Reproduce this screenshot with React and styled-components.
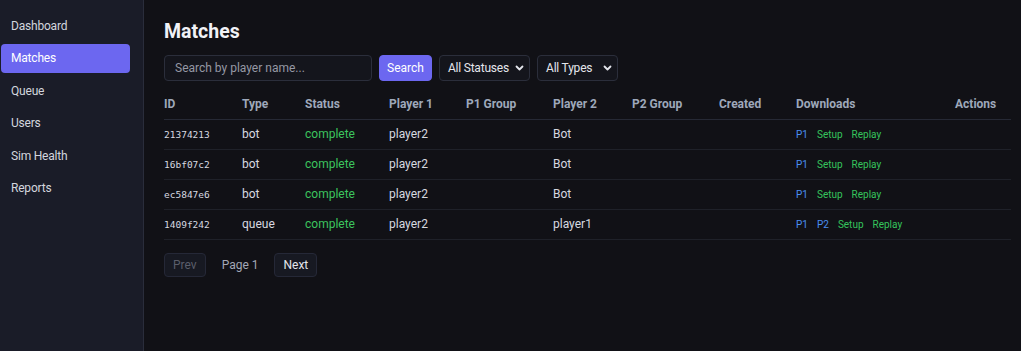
import React from "react";
import styled, { createGlobalStyle } from "styled-components";

const Global = createGlobalStyle`
  html, body { margin: 0; padding: 0; background: #111116; }
  body { font-family: Roboto, "Noto Sans", sans-serif; color: #d7d9e0; }
  * { box-sizing: border-box; }
`;

const Layout = styled.div`
  display: flex;
  min-height: 351px;
`;

const Sidebar = styled.nav`
  width: 144px;
  flex-shrink: 0;
  background: #1a1c28;
  border-right: 1px solid #2a2d3b;
  padding: 11px 13px 0 1px;
  display: flex;
  flex-direction: column;
  gap: 3.6px;
`;

const NavItem = styled.div`
  height: 29px;
  display: flex;
  align-items: center;
  padding-left: 10px;
  border-radius: 4px;
  font-size: 12px;
  letter-spacing: -0.2px;
  color: ${p => (p.$active ? "#ffffff" : "#d3d6de")};
  background: ${p => (p.$active ? "#6c67f0" : "transparent")};
`;

const Main = styled.main`
  flex: 1;
  padding: 17px 10px 20px 20px;
`;

const Title = styled.h1`
  margin: 0 0 8px;
  font-size: 19.5px;
  font-weight: 700;
  color: #f1f2f6;
  line-height: 30px;
`;

const Toolbar = styled.div`
  display: flex;
  gap: 7px;
  align-items: center;
  margin-bottom: 9px;
`;

const Input = styled.input`
  width: 208px;
  height: 26px;
  background: #14151c;
  border: 1px solid #2b2e3b;
  border-radius: 4px;
  padding: 0 10px;
  font: inherit;
  font-size: 12px;
  color: #d7d9e0;
  &::placeholder { color: #9598a4; }
  outline: none;
`;

const Button = styled.button`
  height: ${p => (p.$small ? "24px" : "26px")};
  padding: 0 ${p => (p.$small ? "8px" : "7px")};
  border-radius: 4px;
  font: inherit;
  font-size: 12px;
  border: 1px solid ${p => (p.$primary ? "#6c67f0" : "#252837")};
  background: ${p => (p.$primary ? "#6c67f0" : "#171922")};
  color: ${p => (p.$primary ? "#ffffff" : p.$disabled ? "#5b5e6b" : "#e4e6ec")};
`;

const SelectBox = styled.div`
  height: 26px;
  display: flex;
  align-items: center;
  gap: ${p => p.$gap}px;
  padding: 0 4px 0 8px;
  border: 1px solid #2b2e3b;
  border-radius: 4px;
  background: #14151c;
  font-size: 12px;
  letter-spacing: -0.2px;
  color: #e4e6ec;
`;

const Table = styled.table`
  border-collapse: collapse;
  table-layout: fixed;
  width: 847px;
`;

const Th = styled.th`
  text-align: left;
  font-size: 12px;
  font-weight: 700;
  color: #9ea8ba;
  height: 29px;
  padding: 0;
  border-bottom: 1px solid #262935;
  vertical-align: middle;
`;

const Td = styled.td`
  padding: 0;
  height: 30px;
  font-size: 12px;
  border-bottom: 1px solid #1f2129;
  color: ${p => p.$color || "#d7d9e0"};
  vertical-align: middle;
`;

const Mono = styled.span`
  font-family: "DejaVu Sans Mono", "Liberation Mono", monospace;
  font-size: 9.5px;
  color: #d7d9e0;
`;

const Links = styled.div`
  display: flex;
  gap: 9px;
  font-size: 10px;
`;

const Link = styled.span`
  color: ${p => (p.$blue ? "#4a8ef0" : "#35c45c")};
`;

const Pager = styled.div`
  display: flex;
  align-items: center;
  gap: 16px;
  margin-top: 13px;
  font-size: 12px;
`;

const PageLabel = styled.span`
  color: #a3a8b6;
`;

const Chevron = () => (
  <svg width="11" height="10" viewBox="0 0 11 10">
    <path d="M2.5 3.5 L5.5 6.5 L8.5 3.5" fill="none" stroke="#e4e6ec" strokeWidth="1.8" strokeLinecap="round" strokeLinejoin="round" />
  </svg>
);

const rows = [
  { id: "21374213", type: "bot", p1: "player2", p2: "Bot", dl: ["P1"] },
  { id: "16bf07c2", type: "bot", p1: "player2", p2: "Bot", dl: ["P1"] },
  { id: "ec5847e6", type: "bot", p1: "player2", p2: "Bot", dl: ["P1"] },
  { id: "1409f242", type: "queue", p1: "player2", p2: "player1", dl: ["P1", "P2"] },
];

const cols = [78, 63, 84, 77, 87, 79, 87, 77, 159, 56];
const heads = ["ID", "Type", "Status", "Player 1", "P1 Group", "Player 2", "P2 Group", "Created", "Downloads", "Actions"];

export default function App() {
  return (
    <>
      <Global />
      <Layout>
        <Sidebar>
          <NavItem>Dashboard</NavItem>
          <NavItem $active>Matches</NavItem>
          <NavItem>Queue</NavItem>
          <NavItem>Users</NavItem>
          <NavItem>Sim Health</NavItem>
          <NavItem>Reports</NavItem>
        </Sidebar>
        <Main>
          <Title>Matches</Title>
          <Toolbar>
            <Input placeholder="Search by player name..." />
            <Button $primary>Search</Button>
            <SelectBox $gap={5}>All Statuses <Chevron /></SelectBox>
            <SelectBox $gap={10}>All Types <Chevron /></SelectBox>
          </Toolbar>
          <Table>
            <colgroup>
              {cols.map((w, i) => <col key={i} style={{ width: w }} />)}
            </colgroup>
            <thead>
              <tr>{heads.map(h => <Th key={h}>{h}</Th>)}</tr>
            </thead>
            <tbody>
              {rows.map(r => (
                <tr key={r.id}>
                  <Td><Mono>{r.id}</Mono></Td>
                  <Td>{r.type}</Td>
                  <Td $color="#3cc45e">complete</Td>
                  <Td>{r.p1}</Td>
                  <Td></Td>
                  <Td>{r.p2}</Td>
                  <Td></Td>
                  <Td></Td>
                  <Td>
                    <Links>
                      {r.dl.map(d => <Link key={d} $blue>{d}</Link>)}
                      <Link>Setup</Link>
                      <Link>Replay</Link>
                    </Links>
                  </Td>
                  <Td></Td>
                </tr>
              ))}
            </tbody>
          </Table>
          <Pager>
            <Button $small $disabled>Prev</Button>
            <PageLabel>Page 1</PageLabel>
            <Button $small>Next</Button>
          </Pager>
        </Main>
      </Layout>
    </>
  );
}
